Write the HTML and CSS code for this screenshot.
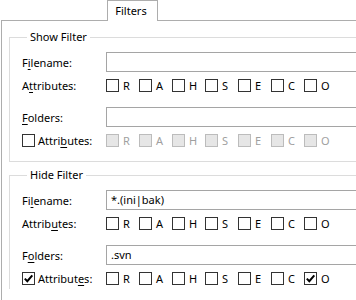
FILE: index.html
```html
<!DOCTYPE html>
<html>
<head>
<meta charset="utf-8">
<link rel="stylesheet" href="styles.css">
</head>
<body>
<div class="dlg">
  <div class="tabstrip">
    <div class="tab">Filters</div>
  </div>
  <div class="page">
    <fieldset class="group">
      <legend>Show Filter</legend>
      <div class="row row-text">
        <span class="lbl">F<u>i</u>lename:</span>
        <div class="textbox"></div>
      </div>
      <div class="row row-attr">
        <span class="lbl">A<u>t</u>tributes:</span>
        <div class="attrs">
          <span class="cb-item"><span class="cb"></span>R</span>
          <span class="cb-item"><span class="cb"></span>A</span>
          <span class="cb-item"><span class="cb"></span>H</span>
          <span class="cb-item"><span class="cb"></span>S</span>
          <span class="cb-item"><span class="cb"></span>E</span>
          <span class="cb-item"><span class="cb"></span>C</span>
          <span class="cb-item"><span class="cb"></span>O</span>
        </div>
      </div>
      <div class="row row-text gap-big">
        <span class="lbl"><u>F</u>olders:</span>
        <div class="textbox"></div>
      </div>
      <div class="row row-attr">
        <span class="lbl lbl-cb"><span class="cb"></span><span>Attri<u>b</u>utes:</span></span>
        <div class="attrs disabled">
          <span class="cb-item"><span class="cb"></span>R</span>
          <span class="cb-item"><span class="cb"></span>A</span>
          <span class="cb-item"><span class="cb"></span>H</span>
          <span class="cb-item"><span class="cb"></span>S</span>
          <span class="cb-item"><span class="cb"></span>E</span>
          <span class="cb-item"><span class="cb"></span>C</span>
          <span class="cb-item"><span class="cb"></span>O</span>
        </div>
      </div>
    </fieldset>

    <fieldset class="group group-hide">
      <legend>Hide Filter</legend>
      <div class="row row-text">
        <span class="lbl">Fi<u>l</u>ename:</span>
        <div class="textbox">*.(ini|bak)</div>
      </div>
      <div class="row row-attr">
        <span class="lbl">Attrib<u>u</u>tes:</span>
        <div class="attrs">
          <span class="cb-item"><span class="cb"></span>R</span>
          <span class="cb-item"><span class="cb"></span>A</span>
          <span class="cb-item"><span class="cb"></span>H</span>
          <span class="cb-item"><span class="cb"></span>S</span>
          <span class="cb-item"><span class="cb"></span>E</span>
          <span class="cb-item"><span class="cb"></span>C</span>
          <span class="cb-item"><span class="cb"></span>O</span>
        </div>
      </div>
      <div class="row row-text gap-big">
        <span class="lbl">F<u>o</u>lders:</span>
        <div class="textbox">.svn</div>
      </div>
      <div class="row row-attr">
        <span class="lbl lbl-cb"><span class="cb"><svg viewBox="0 0 11 11" width="11" height="11"><polyline points="1.8,5.6 4.3,8.2 9.3,2.3" fill="none" stroke="#000" stroke-width="2"/></svg></span><span>Attribut<u>e</u>s:</span></span>
        <div class="attrs">
          <span class="cb-item"><span class="cb"></span>R</span>
          <span class="cb-item"><span class="cb"></span>A</span>
          <span class="cb-item"><span class="cb"></span>H</span>
          <span class="cb-item"><span class="cb"></span>S</span>
          <span class="cb-item"><span class="cb"></span>E</span>
          <span class="cb-item"><span class="cb"></span>C</span>
          <span class="cb-item"><span class="cb"><svg viewBox="0 0 11 11" width="11" height="11"><polyline points="1.8,5.6 4.3,8.2 9.3,2.3" fill="none" stroke="#000" stroke-width="2"/></svg></span>O</span>
        </div>
      </div>
    </fieldset>
  </div>
</div>
</body>
</html>
```

FILE: styles.css
```css
html, body {
  margin: 0;
  padding: 0;
  background: #ffffff;
}
body {
  font-family: "Noto Sans", "Open Sans", sans-serif;
  font-size: 11px;
  color: #000;
}
.dlg {
  width: 356px;
  height: 300px;
  overflow: hidden;
  display: flex;
  flex-direction: column;
}
.tabstrip {
  height: 20px;
  flex: none;
  display: flex;
  padding-left: 107px;
}
.tab {
  position: relative;
  z-index: 1;
  box-sizing: border-box;
  width: 51px;
  height: 21px;
  border: 1px solid #adadad;
  border-bottom: none;
  background: #fff;
  text-align: center;
  line-height: 19px;
  padding-right: 3px;
}
.page {
  flex: 1;
  min-height: 0;
  margin-left: 1px;
  border-top: 1px solid #adadad;
  border-left: 1px solid #adadad;
  padding: 8px 0 0 7px;
  display: flex;
  flex-direction: column;
}
.group {
  margin: 0;
  padding: 0 0 10px 12px;
  border: 1px solid #dcdcdc;
  border-right: none;
  min-width: 0;
}
.group legend {
  margin-left: 5px;
  padding: 0 3px;
  height: 16px;
  line-height: 16px;
  font-size: 11px;
}
.group-hide {
  margin-top: 5px;
  border-bottom: none;
  padding-bottom: 0;
}
.row {
  display: grid;
  grid-template-columns: 84px 1fr;
  align-items: center;
}
.row-text {
  height: 20px;
  margin-top: 7px;
}
.row-text.gap-big {
  margin-top: 11px;
}
.row-attr {
  height: 21px;
  margin-top: 3px;
}
.lbl {
  white-space: nowrap;
}
.lbl u {
  text-decoration-thickness: 1px;
  text-underline-offset: 2px;
}
.lbl-cb {
  display: flex;
  align-items: center;
  gap: 3px;
}
.textbox {
  box-sizing: border-box;
  height: 20px;
  border: 1px solid #a5a5a5;
  border-right: none;
  padding-left: 4px;
  line-height: 18px;
  background: #fff;
}
.attrs {
  display: grid;
  grid-template-columns: repeat(7, 33px);
}
.cb-item {
  display: flex;
  align-items: center;
  gap: 4px;
}
.cb {
  box-sizing: border-box;
  width: 13px;
  height: 13px;
  border: 1px solid #333333;
  background: #fff;
  flex: none;
  display: flex;
}
.cb svg {
  display: block;
}
.attrs.disabled .cb-item {
  color: #a0a0a0;
}
.attrs.disabled .cb {
  border-color: #bcbcbc;
  background: #e6e6e6;
}
```
